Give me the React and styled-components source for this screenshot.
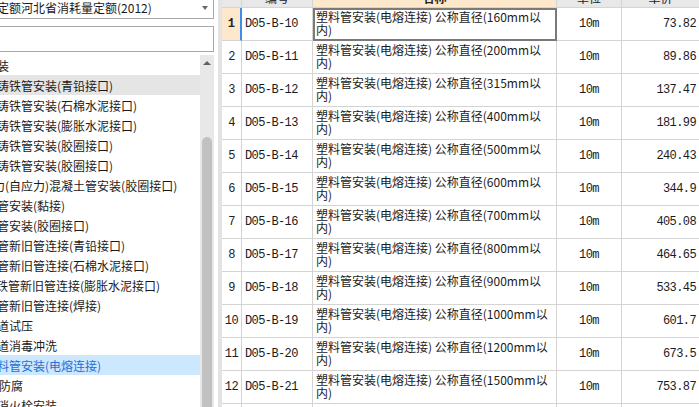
import React from 'react';
import styled, { createGlobalStyle } from 'styled-components';

const GlobalStyle = createGlobalStyle`
  html, body {
    margin: 0;
    padding: 0;
    background: #fff;
  }
  body {
    font-family: "Noto Sans CJK SC", "Noto Sans", sans-serif;
    font-size: 12px;
    color: #1b1b1b;
  }
`;

const Screen = styled.div`
  display: flex;
  width: 699px;
  height: 407px;
  overflow: hidden;
  background: #fff;
`;

const Sidebar = styled.aside`
  width: 214px;
  flex-shrink: 0;
  display: flex;
  flex-direction: column;
  margin-right: 4px;
`;

const Picker = styled.div`
  height: 19px;
  box-sizing: border-box;
  border-right: 1px solid #a8a8a8;
  border-bottom: 1px solid #a8a8a8;
  display: flex;
  align-items: center;
  padding: 0 5px 3px 0;
  gap: 6px;
`;

const Clip = styled.div`
  flex: 1;
  min-width: 0;
  overflow: hidden;
  white-space: nowrap;
  line-height: 14px;
`;

const Shifted = styled.span`
  display: inline-block;
  margin-left: ${p => -p.$offset}px;
`;

const SearchBox = styled.div`
  margin-top: 7px;
  height: 26px;
  box-sizing: border-box;
  border: 1px solid #a8a8a8;
  border-left: none;
  background: #fff;
`;

const ListArea = styled.div`
  margin-top: 3px;
  flex: 1;
  min-height: 0;
  display: flex;
`;

const List = styled.div`
  flex: 1;
  min-width: 0;
  overflow: hidden;
`;

const Item = styled.div`
  height: 20px;
  display: flex;
  align-items: center;
  overflow: hidden;
  white-space: nowrap;
  background: ${p => (p.$selected ? '#cce8ff' : p.$hover ? '#e5e5e5' : 'transparent')};
  color: ${p => (p.$selected ? '#1f6fd4' : '#1b1b1b')};
`;

const Scrollbar = styled.div`
  width: 14px;
  flex-shrink: 0;
  background: #e8e8e8;
  display: flex;
  flex-direction: column;
  align-items: center;
`;

const ScrollArrow = styled.div`
  height: 10px;
  display: flex;
  align-items: flex-end;
`;

const Thumb = styled.div`
  margin-top: ${p => p.$top}px;
  width: 10px;
  flex: 1;
  border-radius: 5px 5px 0 0;
  background: #c1c1c1;
`;

const Splitter = styled.div`
  width: 4px;
  flex-shrink: 0;
  background: #e3e3e3;
`;

const TablePane = styled.div`
  flex: 1;
  min-width: 0;
  overflow: hidden;
`;

const Grid = styled.div`
  display: grid;
  grid-template-columns: 20px 71px 244px 65px 78px;
  grid-template-rows: 24px;
  grid-auto-rows: 33px;
  margin-top: -16px;
  width: max-content;
`;

const Cell = styled.div`
  box-sizing: border-box;
  border-right: 1px solid #d4d4d4;
  border-bottom: 1px solid #d4d4d4;
  background: #fff;
  overflow: hidden;
`;

const HeadCell = styled(Cell)`
  background: ${p => (p.$active ? '#fde8cc' : '#e8e8e8')};
  display: flex;
  align-items: flex-end;
  justify-content: center;
  padding-bottom: 3px;
  line-height: 12px;
  font-weight: ${p => (p.$active ? 700 : 400)};
  color: #222;
`;

const IndexCell = styled(Cell)`
  display: flex;
  align-items: center;
  justify-content: center;
  font-family: "Liberation Mono", "DejaVu Sans Mono", monospace;
  font-size: 12px;
  letter-spacing: -0.5px;
  background: ${p => (p.$current ? '#fde8cc' : '#fff')};
  border-right: ${p => (p.$current ? '2px solid #3d8ee6' : '1px solid #d4d4d4')};
  font-weight: ${p => (p.$current ? 700 : 400)};
  color: #222;
`;

const CodeCell = styled(Cell)`
  display: flex;
  align-items: center;
  justify-content: ${p => p.$align || 'flex-start'};
  padding: 0 3px;
  font-family: "Liberation Mono", "DejaVu Sans Mono", monospace;
  font-size: 12px;
  letter-spacing: -0.6px;
  color: #1b1b1b;
`;

const NameCell = styled(Cell)`
  padding: 2px 2px 0 3px;
  font-size: 12px;
  line-height: 13px;
  color: #1b1b1b;
  ${p => p.$focused && 'outline: 2px solid #7a7a7a; outline-offset: -2px;'}
`;

const tree = [
  { text: '室外给水管道安装', offset: 87 },
  { text: '承插铸铁管安装(青铅接口)', offset: 27, hover: true },
  { text: '承插铸铁管安装(石棉水泥接口)', offset: 27 },
  { text: '承插铸铁管安装(膨胀水泥接口)', offset: 27 },
  { text: '承插铸铁管安装(胶圈接口)', offset: 27 },
  { text: '球墨铸铁管安装(胶圈接口)', offset: 27 },
  { text: '预应力(自应力)混凝土管安装(胶圈接口)', offset: 31 },
  { text: '塑料给水管安装(黏接)', offset: 51 },
  { text: '塑料给水管安装(胶圈接口)', offset: 51 },
  { text: '铸铁管新旧管连接(青铅接口)', offset: 27 },
  { text: '铸铁管新旧管连接(石棉水泥接口)', offset: 27 },
  { text: '球墨铸铁管新旧管连接(膨胀水泥接口)', offset: 40 },
  { text: '钢管新旧管连接(焊接)', offset: 15 },
  { text: '管道试压', offset: 15 },
  { text: '管道消毒冲洗', offset: 15 },
  { text: '塑料管安装(电熔连接)', offset: 15, selected: true },
  { text: '管道防腐', offset: 25 },
  { text: '室外消火栓安装', offset: 27 },
];

const rows = [
  ['D05-B-10', 160, '73.82'],
  ['D05-B-11', 200, '89.86'],
  ['D05-B-12', 315, '137.47'],
  ['D05-B-13', 400, '181.99'],
  ['D05-B-14', 500, '240.43'],
  ['D05-B-15', 600, '344.9'],
  ['D05-B-16', 700, '405.08'],
  ['D05-B-17', 800, '464.65'],
  ['D05-B-18', 900, '533.45'],
  ['D05-B-19', 1000, '601.7'],
  ['D05-B-20', 1200, '673.5'],
  ['D05-B-21', 1500, '753.87'],
];

const headers = ['', '编号', '名称', '单位', '单价'];

const App = () => {
  return (
    <Screen>
      <GlobalStyle />
      <Sidebar>
        <Picker>
          <Clip>
            <Shifted $offset={123}>全国统一安装工程预算定额河北省消耗量定额(2012)</Shifted>
          </Clip>
          <svg width="6" height="4" viewBox="0 0 6 4">
            <path d="M0 0h6L3 4z" fill="#6a6a6a" />
          </svg>
        </Picker>
        <SearchBox />
        <ListArea>
          <List>
            {tree.map((node, i) => (
              <Item key={i} $hover={node.hover} $selected={node.selected}>
                <Shifted $offset={node.offset}>{node.text}</Shifted>
              </Item>
            ))}
          </List>
          <Scrollbar>
            <ScrollArrow>
              <svg width="8" height="4" viewBox="0 0 8 4">
                <path d="M0 4L4 0l4 4z" fill="#606060" />
              </svg>
            </ScrollArrow>
            <Thumb $top={72} />
          </Scrollbar>
        </ListArea>
      </Sidebar>
      <Splitter />
      <TablePane>
        <Grid>
          {headers.map((h, i) => (
            <HeadCell key={i} $active={i === 2}>{h}</HeadCell>
          ))}
          {rows.map(([code, size, price], i) => (
            <React.Fragment key={code}>
              <IndexCell $current={i === 0}>{i + 1}</IndexCell>
              <CodeCell>{code}</CodeCell>
              <NameCell $focused={i === 0}>塑料管安装(电熔连接) 公称直径({size}mm以内)</NameCell>
              <CodeCell $align="center">10m</CodeCell>
              <CodeCell $align="flex-end">{price}</CodeCell>
            </React.Fragment>
          ))}
          <IndexCell />
          <Cell />
          <Cell />
          <Cell />
          <Cell />
        </Grid>
      </TablePane>
    </Screen>
  );
};

export default App;
